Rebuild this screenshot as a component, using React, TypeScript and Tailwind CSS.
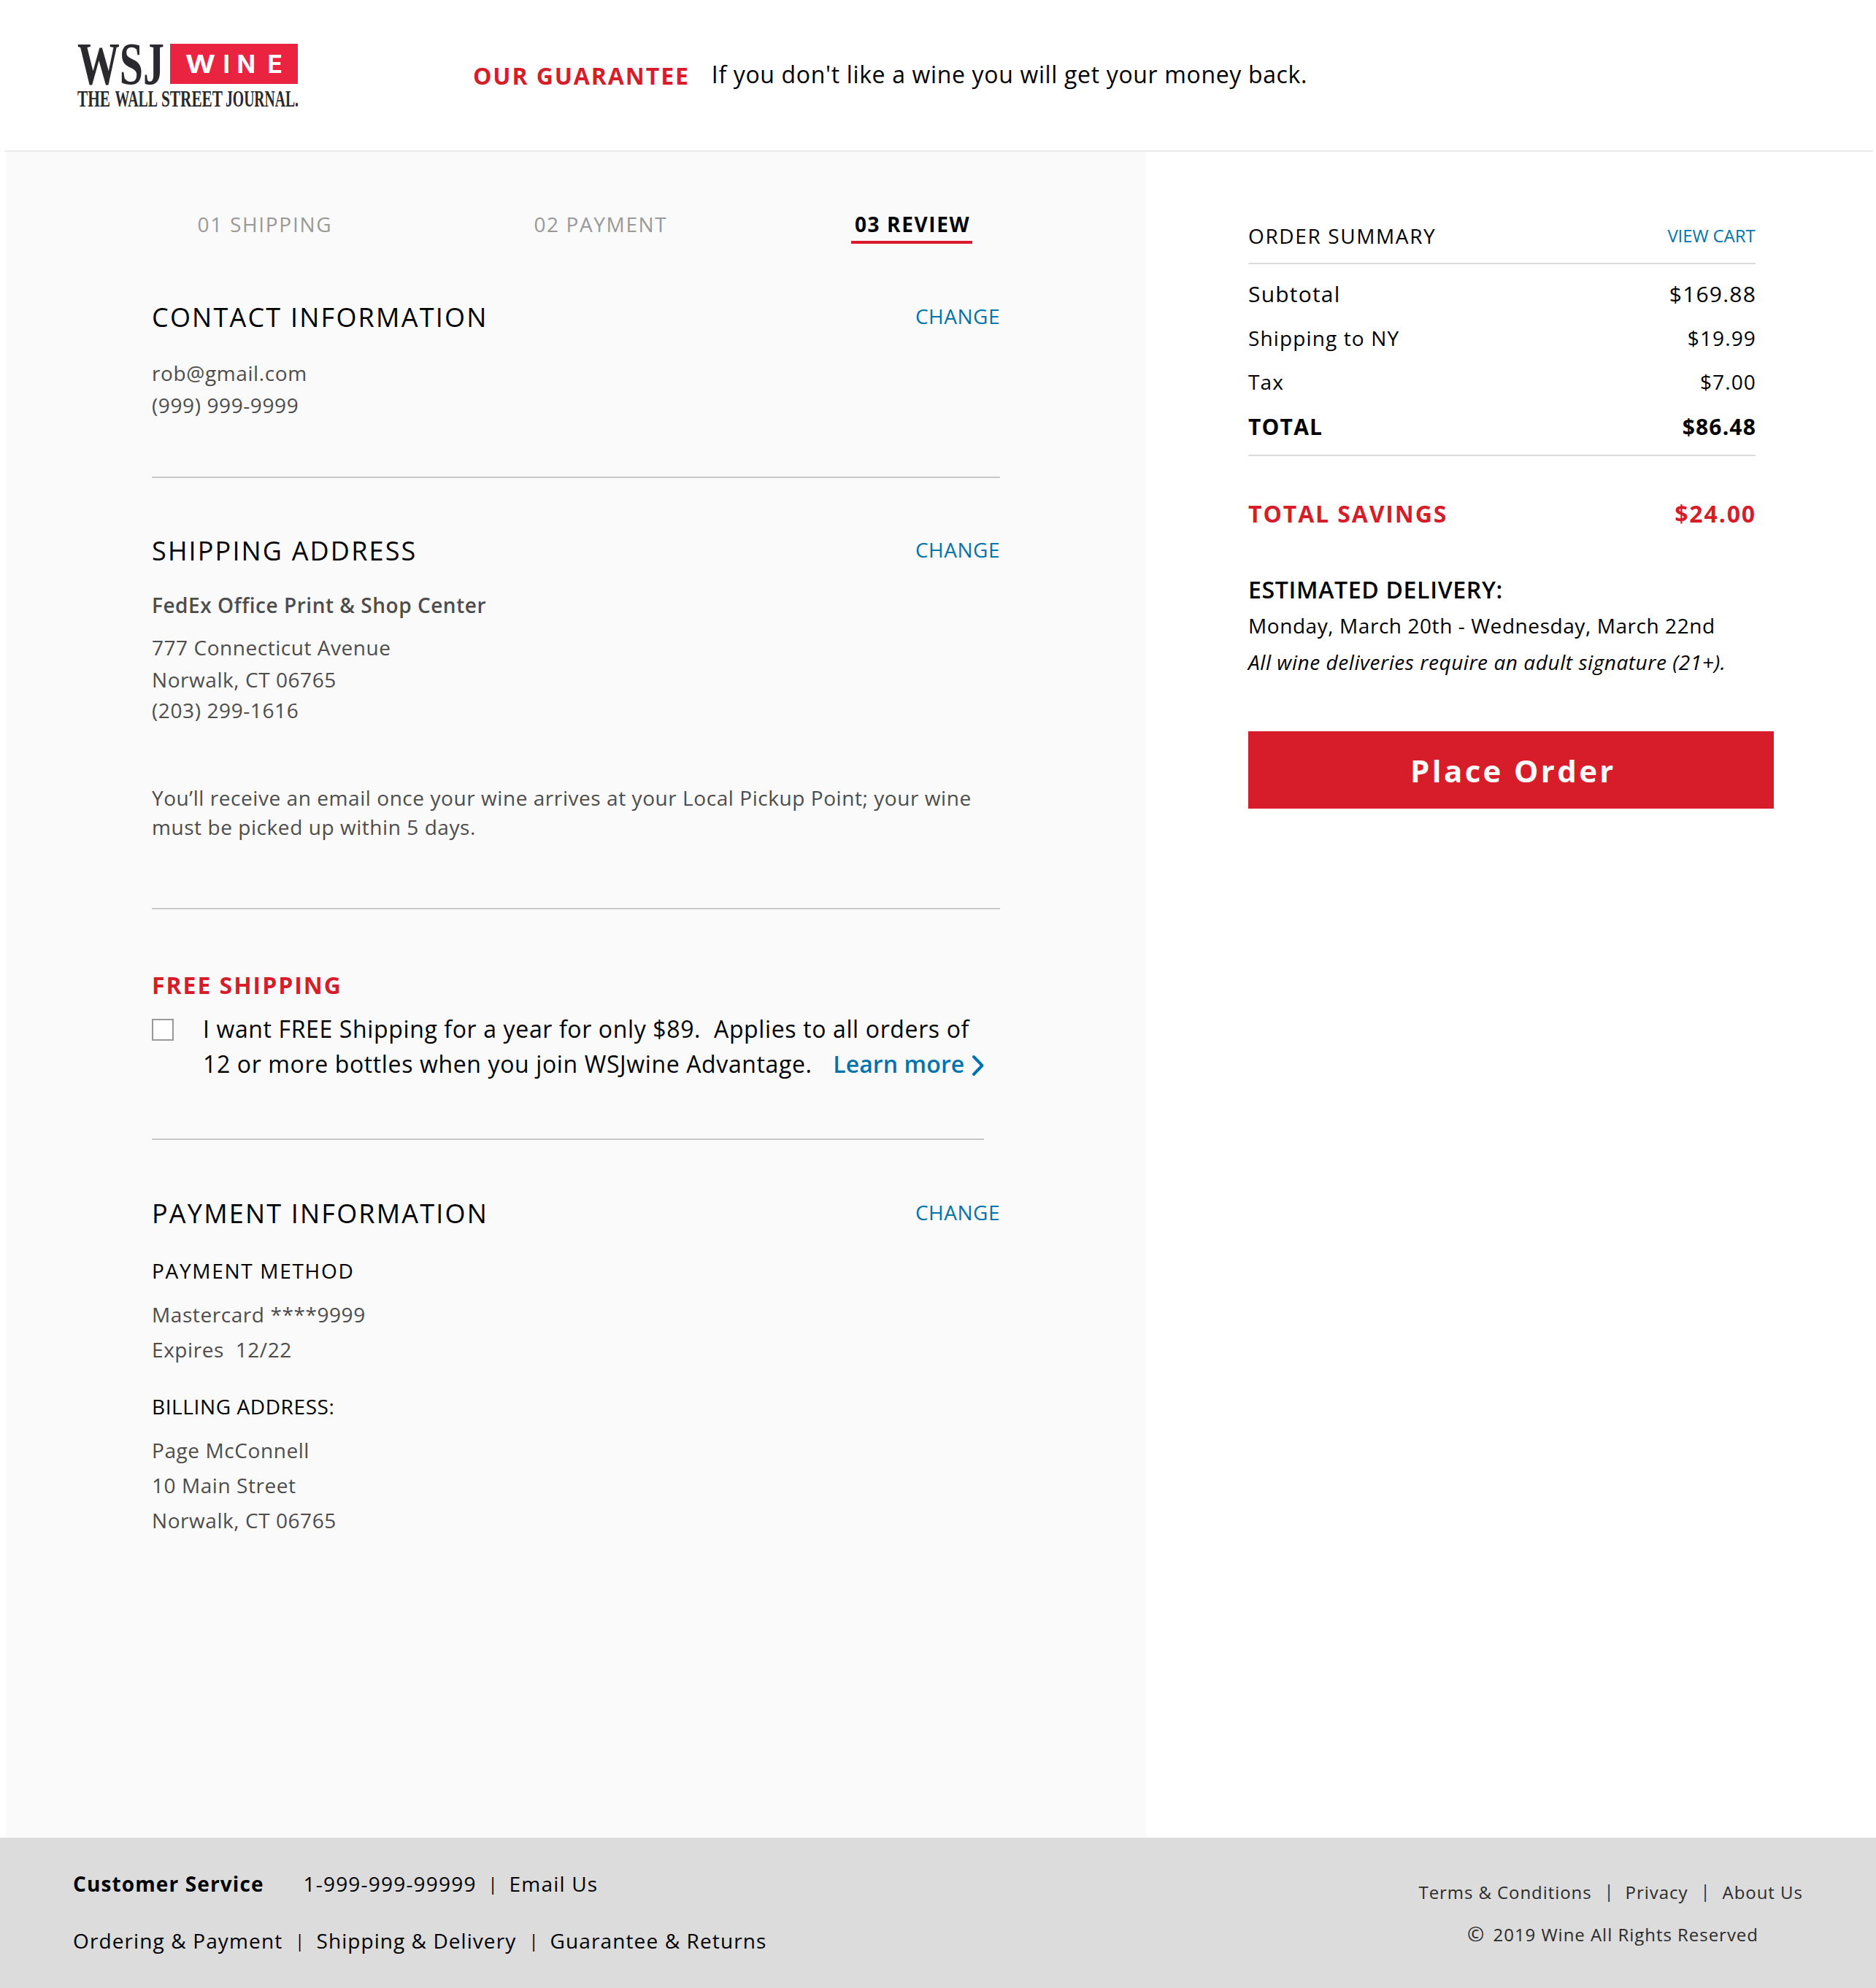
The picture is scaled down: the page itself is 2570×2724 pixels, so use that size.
import React from 'react';

function Logo() {
  return (
    <svg
      width="306"
      height="92"
      viewBox="0 0 306 92"
      className="block shrink-0 overflow-visible"
      fontFamily='"Liberation Serif", serif'
      fontWeight="700"
      fill="#2a2a2e"
    >
      <text x="0" y="55" fontSize="83.5" textLength="119" lengthAdjust="spacingAndGlyphs">WSJ</text>
      <rect x="127" y="0" width="175" height="55" fill="#ea2440" />
      <text y="39.7" fontFamily="Inter, sans-serif" fontSize="33.5" fill="#ffffff">
        <tspan x="148" textLength="41" lengthAdjust="spacingAndGlyphs">W</tspan>
        <tspan x="199.4">I</tspan>
        <tspan x="218.5">N</tspan>
        <tspan x="260.5">E</tspan>
      </text>
      <text y="85.5" fontSize="31">
        <tspan x="0" textLength="45" lengthAdjust="spacingAndGlyphs">THE</tspan>
        <tspan x="51.5" textLength="58.5" lengthAdjust="spacingAndGlyphs">WALL</tspan>
        <tspan x="115" textLength="84" lengthAdjust="spacingAndGlyphs">STREET</tspan>
        <tspan x="203" textLength="100" lengthAdjust="spacingAndGlyphs">JOURNAL.</tspan>
      </text>
    </svg>
  );
}

function Header() {
  return (
    <header className="mr-1 ml-1.5 flex h-[208px] items-start border-b-2 border-[#ebebeb] pl-[100px]">
      <div className="pt-[60px]">
        <Logo />
      </div>
      <p className="ml-[236px] pt-[82px] text-[32px] leading-[43px] font-bold tracking-[1.9px] text-[#d71d2a]">
        OUR GUARANTEE
      </p>
      <p className="ml-[30px] pt-20 text-[32px] leading-[43px] tracking-[0.65px]">
        If you don't like a wine you will get your money back.
      </p>
    </header>
  );
}

function Steps() {
  return (
    <nav className="flex pl-[62.5px] text-[28px] leading-[38px] text-[#999999]">
      <span className="w-[461px] tracking-[1.7px]">01 SHIPPING</span>
      <span className="w-[434.5px] tracking-[1.6px]">02 PAYMENT</span>
      <span className="w-[166px] border-b-4 border-[#da1a2e] pb-1 pl-[5px] font-bold tracking-[1.6px] text-black">
        03 REVIEW
      </span>
    </nav>
  );
}

function SectionHead({ title, spacing }: { title: string; spacing: string }) {
  return (
    <div className="flex w-[1162px] items-start justify-between">
      <h2 className={'text-[36px] leading-[49px] ' + spacing}>{title}</h2>
      <a className="mt-1 text-[28px] leading-[38px] tracking-[0.51px] text-[#0274ad]">CHANGE</a>
    </div>
  );
}

function Rule({ className }: { className: string }) {
  return <div className={'h-0.5 bg-[#c8c8c8] ' + className} />;
}

function ReviewPanel() {
  return (
    <section className="ml-2 w-[1562px] shrink-0 bg-[#fafafa] pt-20 pl-[200px]">
      <Steps />

      <div className="mt-[76px] text-[28px] leading-[38px] text-[#4d4d4d]">
        <div className="text-black">
          <SectionHead title="CONTACT INFORMATION" spacing="tracking-[2.22px]" />
        </div>
        <p className="mt-[33px] tracking-[0.6px]">rob@gmail.com</p>
        <p className="mt-1.5 tracking-[0.6px]">(999) 999-9999</p>
      </div>

      <Rule className="mt-[79px] w-[1162px]" />

      <div className="mt-[75px] text-[28px] leading-[38px] text-[#4d4d4d]">
        <div className="text-black">
          <SectionHead title="SHIPPING ADDRESS" spacing="tracking-[2.15px]" />
        </div>
        <p className="mt-[31px] font-semibold tracking-[0.52px]">FedEx Office Print &amp; Shop Center</p>
        <p className="mt-5 tracking-[0.54px]">777 Connecticut Avenue</p>
        <p className="mt-1.5 tracking-[0.56px]">Norwalk, CT 06765</p>
        <p className="mt-1 tracking-[0.6px]">(203) 299-1616</p>
        <p className="mt-[82px] tracking-[0.56px]">
          You’ll receive an email once your wine arrives at your Local Pickup Point; your wine
        </p>
        <p className="mt-0.5 tracking-[0.56px]">must be picked up within 5 days.</p>
      </div>

      <Rule className="mt-[92px] w-[1162px]" />

      <div className="mt-[82px] text-[32px] leading-[43px]">
        <h3 className="font-bold tracking-[1.95px] text-[#d71d2a]">FREE SHIPPING</h3>
        <div className="mt-[17px] flex items-start">
          <span className="mt-2 block size-[30px] shrink-0 border-2 border-[#999999] bg-white" />
          <div className="ml-10">
            <p className="whitespace-pre tracking-[0.63px]">
              {'I want FREE Shipping for a year for only $89.  Applies to all orders of'}
            </p>
            <div className="mt-[5px] flex items-start">
              <p className="tracking-[0.63px]">12 or more bottles when you join WSJwine Advantage.</p>
              <a className="ml-[28.5px] flex items-start font-semibold tracking-[0.1px] text-[#0274ad]">
                Learn more
                <svg
                  width="18"
                  height="30"
                  viewBox="0 0 18 30"
                  fill="none"
                  stroke="#0274ad"
                  strokeWidth="4"
                  strokeLinecap="round"
                  strokeLinejoin="round"
                  className="mt-[9px] ml-[10px] block"
                >
                  <path d="M3 3 L14.5 15 L3 27" />
                </svg>
              </a>
            </div>
          </div>
        </div>
      </div>

      <Rule className="mt-[81px] w-[1140px]" />

      <div className="mt-[76px] text-[28px] leading-[38px] text-[#4d4d4d]">
        <div className="text-black">
          <SectionHead title="PAYMENT INFORMATION" spacing="tracking-[2.2px]" />
        </div>
        <h3 className="mt-[35px] tracking-[1.7px] text-black">PAYMENT METHOD</h3>
        <p className="mt-[22px] tracking-[0.58px]">Mastercard ****9999</p>
        <p className="mt-2.5 whitespace-pre tracking-[0.58px]">{'Expires  12/22'}</p>
        <h3 className="mt-10 tracking-[0.6px] text-black">BILLING ADDRESS:</h3>
        <p className="mt-[22px] tracking-[0.58px]">Page McConnell</p>
        <p className="mt-2.5 tracking-[0.56px]">10 Main Street</p>
        <p className="mt-2.5 tracking-[0.56px]">Norwalk, CT 06765</p>
      </div>
    </section>
  );
}

function Row({ label, value, className }: { label: string; value: string; className: string }) {
  return (
    <div className={'flex justify-between ' + className}>
      <span>{label}</span>
      <span>{value}</span>
    </div>
  );
}

function Summary() {
  return (
    <aside className="w-[860px] pt-24 pl-[140px]">
      <div className="w-[696px]">
        <div className="flex items-start justify-between">
          <h2 className="text-[28px] leading-[38px] tracking-[1.62px]">ORDER SUMMARY</h2>
          <a className="mt-0.5 mr-[1.5px] text-[24px] leading-[33px] tracking-[-0.11px] text-[#0274ad]">VIEW CART</a>
        </div>
        <div className="mt-[18px] h-0.5 w-[695px] bg-[#dcdcdc]" />
        <Row label="Subtotal" value="$169.88" className="mt-5 text-[30px] leading-[41px] tracking-[1.2px]" />
        <Row label="Shipping to NY" value="$19.99" className="mt-[21px] text-[28px] leading-[38px] tracking-[1.13px]" />
        <Row label="Tax" value="$7.00" className="mt-[22px] text-[28px] leading-[38px] tracking-[1.13px]" />
        <Row label="TOTAL" value="$86.48" className="mt-[22px] text-[30px] leading-[41px] font-bold tracking-[1.17px]" />
        <div className="mt-[18px] h-0.5 w-[695px] bg-[#dcdcdc]" />
        <Row
          label="TOTAL SAVINGS"
          value="$24.00"
          className="mt-[57px] text-[32px] leading-[43px] font-bold tracking-[1.87px] text-[#d71d2a]"
        />
      </div>
      <h3 className="mt-[61px] text-[32px] leading-[43px] font-semibold tracking-[0.68px]">ESTIMATED DELIVERY:</h3>
      <p className="mt-[9px] text-[28px] leading-[38px] tracking-[0.57px]">Monday, March 20th - Wednesday, March 22nd</p>
      <p className="mt-3 text-[28px] leading-[38px] tracking-[0.56px] italic">
        All wine deliveries require an adult signature (21+).
      </p>
      <button className="mt-[76px] flex h-[106px] w-[720px] items-start bg-[#d71d2a] pt-[25px] pl-[222px] text-[42px] leading-[57px] font-bold tracking-[3.36px] text-[#fafafa]">
        Place Order
      </button>
    </aside>
  );
}

function Bar({ className }: { className: string }) {
  return <span className={'w-[13px] shrink-0 text-center text-[24px] leading-[33px] tracking-normal ' + className}>|</span>;
}

function Footer() {
  return (
    <footer className="flex h-[206px] items-start bg-[#dcdcdc] pt-11 pl-[100px] whitespace-nowrap">
      <div className="w-[1843.5px] shrink-0 text-[28px] leading-[38px] tracking-[1.12px]">
        <div className="flex items-start">
          <span className="w-[315.5px] font-bold">Customer Service</span>
          <span className="w-[253px] tracking-[1.2px]">1-999-999-99999</span>
          <Bar className="mt-0.5" />
          <span className="ml-4 tracking-[1.2px]">Email Us</span>
        </div>
        <div className="mt-10 flex items-start">
          <span className="w-[304px]">Ordering &amp; Payment</span>
          <Bar className="mt-0.5" />
          <span className="ml-[16.5px] w-[291px] tracking-[1.06px]">Shipping &amp; Delivery</span>
          <Bar className="mt-0.5" />
          <span className="ml-4">Guarantee &amp; Returns</span>
        </div>
      </div>
      <div className="mt-3.5 text-[24px] leading-[33px] tracking-[0.96px] text-[#2b2b2b]">
        <div className="flex items-start">
          <span className="w-[254px] tracking-[0.93px]">Terms &amp; Conditions</span>
          <Bar className="-mt-0.5" />
          <span className="ml-4 w-[103px]">Privacy</span>
          <Bar className="-mt-0.5" />
          <span className="ml-[17px]">About Us</span>
        </div>
        <div className="mt-[21px] flex items-start pl-[66.5px]">
          <span className="w-[35.5px] text-[28px] leading-[38px]">©</span>
          <span className="mt-1 tracking-[0.97px]">2019 Wine All Rights Reserved</span>
        </div>
      </div>
    </footer>
  );
}

export default function App() {
  return (
    <div className="w-[2570px] bg-white font-['Open_Sans',sans-serif] text-black">
      <Header />
      <main className="flex h-[2310px]">
        <ReviewPanel />
        <Summary />
      </main>
      <Footer />
    </div>
  );
}
